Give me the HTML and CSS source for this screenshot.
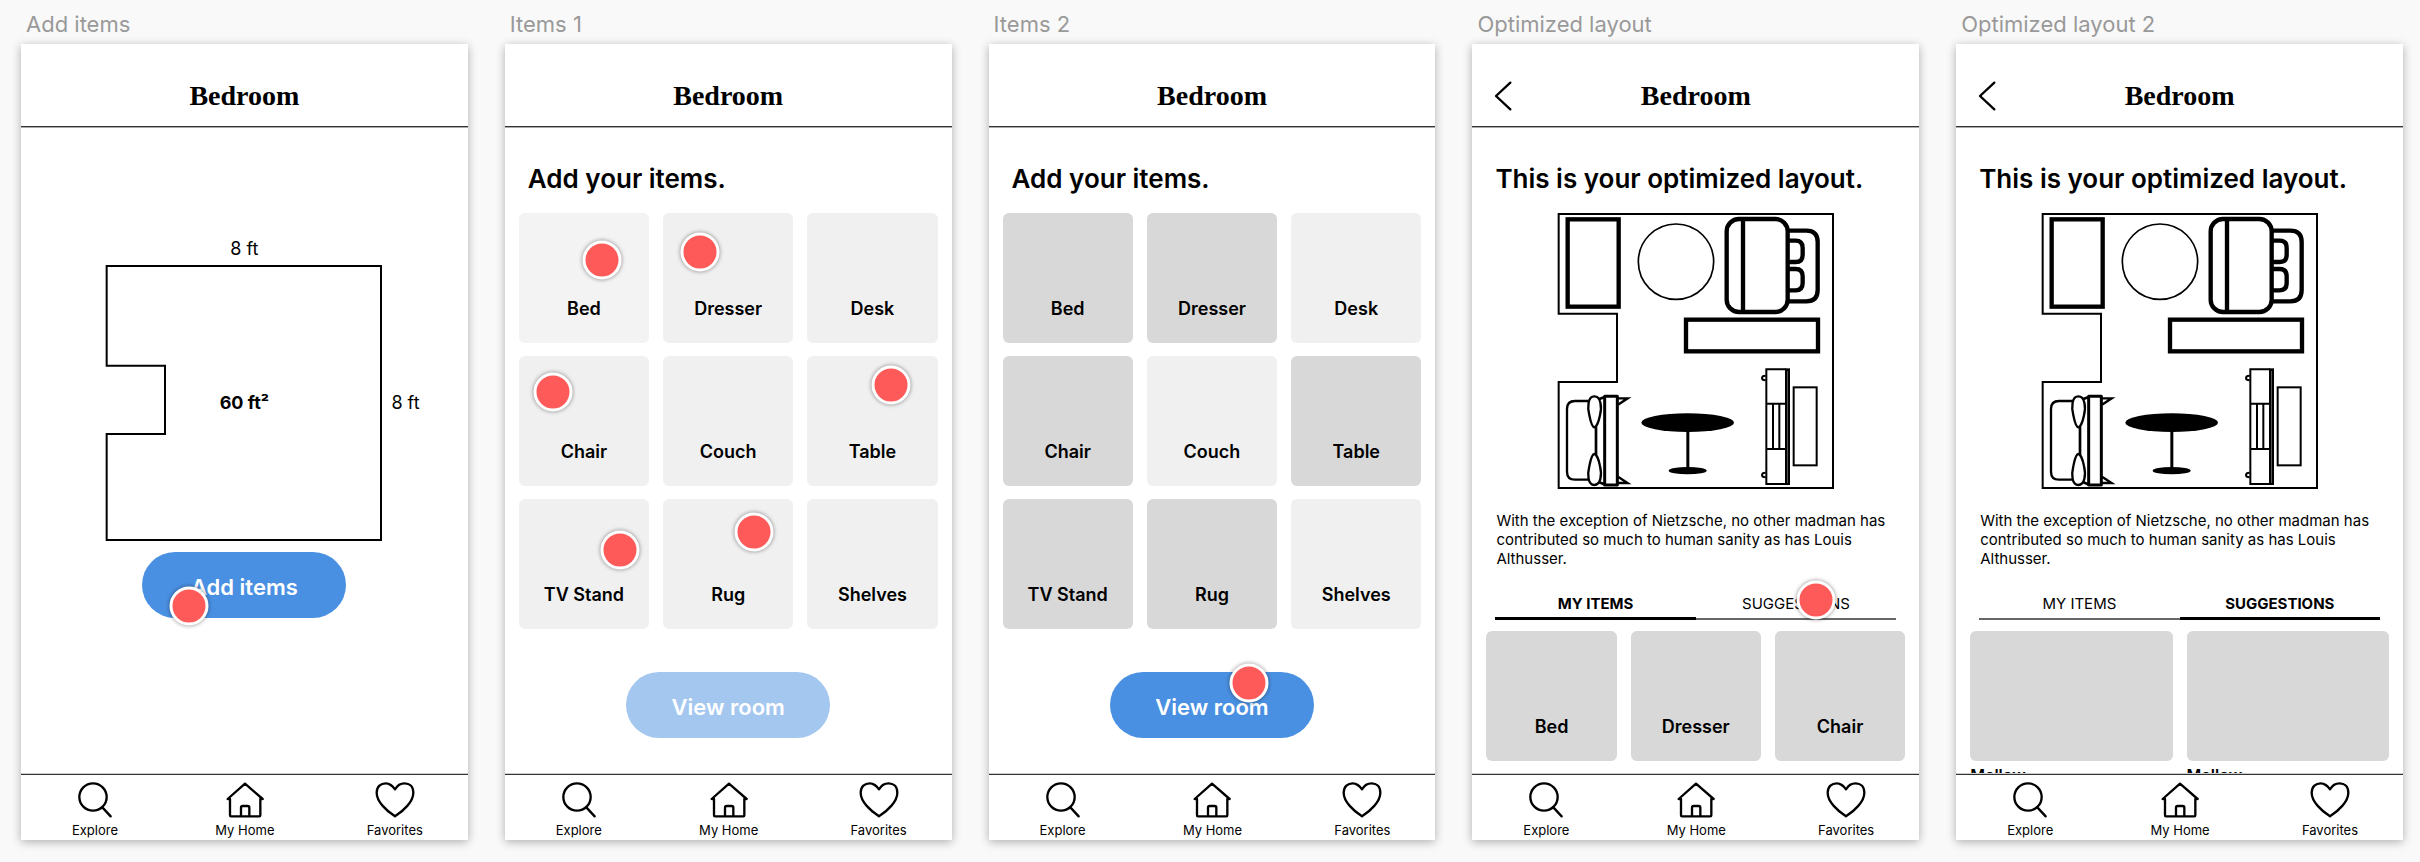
FILE: index.html
```html
<!DOCTYPE html>
<html lang="en">
<head>
<meta charset="utf-8">
<meta name="viewport" content="width=device-width, initial-scale=1">
<title>Bedroom planner</title>
<link rel="stylesheet" href="styles.css">
</head>
<body>
<svg class="sprite" aria-hidden="true">
  <symbol id="search" viewBox="0 0 120 114"><g class="ink"><circle cx="54" cy="48" r="41"/><path d="M82 79L107 106"/></g></symbol>
  <symbol id="home" viewBox="0 0 120 114"><g class="ink"><path d="M15 56L8 54L60 8L113 54L106 56M15 54V103Q15 106 18 106H103Q106 106 106 103V54M48 106V80Q48 75 53 75H68Q73 75 73 80V106"/></g></symbol>
  <symbol id="heart" viewBox="0 0 120 114"><g class="ink"><path d="M60 106C35 90 5 62 5 35C5 16 18 7 32 7C45 7 51 13 60 25C69 13 75 7 89 7C103 7 115 16 115 35C115 62 85 90 60 106Z"/></g></symbol>
  <symbol id="room" viewBox="49 35 834 834"><path fill="none" stroke="#000" stroke-width="6" d="M54 41H877V863H54V545H229V340H54Z"/></symbol>
  <symbol id="furniture" viewBox="49 35 834 834">
    <g fill="none" stroke="#000" stroke-width="6">
      <g stroke-width="13">
        <rect x="81" y="57" width="153" height="262"/>
        <rect x="436" y="358" width="396" height="95"/>
        <rect x="558" y="56" width="183" height="279" rx="37"/>
        <path d="M607 56V335M741 91H797Q831 91 831 125V269Q831 303 797 303H741"/>
        <path d="M741 121H765Q786 121 786 143V163Q786 185 765 185H741M741 206H765Q786 206 786 228V248Q786 270 765 270H741"/>
      </g>
      <circle cx="406" cy="184" r="113" stroke-width="5"/>
      <rect x="759" y="561" width="69" height="234"/>
      <rect x="736" y="507" width="9" height="344" fill="#555"/>
      <path d="M736 507H677V851H736M677 610H736M677 746H736M697 610V746M716 610V746"/>
      <path d="M675 526Q664 526 664 533Q664 540 675 540M675 817Q664 817 664 824Q664 831 675 831"/>
      <path stroke-width="7" d="M145 602H103Q79 602 79 626V814Q79 838 103 838H145"/>
      <path stroke-width="7" d="M161 588C181 588 184 620 178 645C174 665 167 681 161 681C155 681 150 665 146 645C140 620 141 588 161 588Z"/>
      <path stroke-width="7" d="M161 854C181 854 184 822 178 797C174 777 167 761 161 761C155 761 150 777 146 797C140 822 141 854 161 854Z"/>
      <path stroke-width="8" d="M166 678V764M176 596L194 589M176 846L194 853"/>
      <path stroke-width="9" stroke-linejoin="round" d="M192 588H230V854H192Z"/>
      <path stroke-width="7" d="M232 594H261L232 613M232 848H261L232 829"/>
    </g>
    <ellipse cx="441" cy="667" rx="139" ry="28"/>
    <path d="M437 690H446V805H437Z"/>
    <ellipse cx="441" cy="811" rx="57" ry="11"/>
  </symbol>
</svg>
<main class="board">
  <section class="artboard">
    <h2 class="artboard-name">Add items</h2>
    <div class="screen">
      <header class="bar"><h1 class="title">Bedroom</h1></header>
      <div class="content measure">
        <p class="dimension">8 ft</p>
        <div class="measure-row">
          <svg class="plan" role="img" aria-label="Room outline"><use href="#room"/></svg>
          <p class="area">60 ft²</p>
          <p class="dimension side">8 ft</p>
        </div>
        <button class="cta" type="button">Add items<span class="marker on-add"></span></button>
      </div>
      <nav class="tabbar">
        <a href="#"><svg><use href="#search"/></svg>Explore</a>
        <a href="#"><svg><use href="#home"/></svg>My Home</a>
        <a href="#"><svg><use href="#heart"/></svg>Favorites</a>
      </nav>
    </div>
  </section>

  <section class="artboard">
    <h2 class="artboard-name">Items 1</h2>
    <div class="screen">
      <header class="bar"><h1 class="title">Bedroom</h1></header>
      <div class="content">
        <h2 class="heading">Add your items.</h2>
        <div class="tiles">
          <button class="tile pressed" type="button">Bed<span class="marker on-bed"></span></button>
          <button class="tile" type="button">Dresser<span class="marker on-dresser"></span></button>
          <button class="tile" type="button">Desk</button>
          <button class="tile" type="button">Chair<span class="marker on-chair"></span></button>
          <button class="tile" type="button">Couch</button>
          <button class="tile" type="button">Table<span class="marker on-table"></span></button>
          <button class="tile" type="button">TV Stand<span class="marker on-tv"></span></button>
          <button class="tile" type="button">Rug<span class="marker on-rug"></span></button>
          <button class="tile" type="button">Shelves</button>
        </div>
        <button class="cta after-tiles" type="button" disabled>View room</button>
      </div>
      <nav class="tabbar">
        <a href="#"><svg><use href="#search"/></svg>Explore</a>
        <a href="#"><svg><use href="#home"/></svg>My Home</a>
        <a href="#"><svg><use href="#heart"/></svg>Favorites</a>
      </nav>
    </div>
  </section>

  <section class="artboard">
    <h2 class="artboard-name">Items 2</h2>
    <div class="screen">
      <header class="bar"><h1 class="title">Bedroom</h1></header>
      <div class="content">
        <h2 class="heading">Add your items.</h2>
        <div class="tiles">
          <button class="tile selected" type="button" aria-pressed="true">Bed</button>
          <button class="tile selected" type="button" aria-pressed="true">Dresser</button>
          <button class="tile" type="button">Desk</button>
          <button class="tile selected" type="button" aria-pressed="true">Chair</button>
          <button class="tile" type="button">Couch</button>
          <button class="tile selected" type="button" aria-pressed="true">Table</button>
          <button class="tile selected" type="button" aria-pressed="true">TV Stand</button>
          <button class="tile selected" type="button" aria-pressed="true">Rug</button>
          <button class="tile" type="button">Shelves</button>
        </div>
        <button class="cta after-tiles" type="button">View room<span class="marker on-view"></span></button>
      </div>
      <nav class="tabbar">
        <a href="#"><svg><use href="#search"/></svg>Explore</a>
        <a href="#"><svg><use href="#home"/></svg>My Home</a>
        <a href="#"><svg><use href="#heart"/></svg>Favorites</a>
      </nav>
    </div>
  </section>

  <section class="artboard">
    <h2 class="artboard-name">Optimized layout</h2>
    <div class="screen">
      <header class="bar">
        <button class="back" type="button" aria-label="Back"><svg viewBox="0 0 54 90"><path class="ink" d="M49 5L6 45L49 85"/></svg></button>
        <h1 class="title">Bedroom</h1>
      </header>
      <div class="content">
        <h2 class="heading">This is your optimized layout.</h2>
        <svg class="plan furnished" role="img" aria-label="Furnished room"><use href="#room"/><use href="#furniture"/></svg>
        <p class="note">With the exception of Nietzsche, no other madman has contributed so much to human sanity as has Louis Althusser.</p>
        <div class="tabs" role="tablist">
          <button class="tab active" type="button" role="tab" aria-selected="true">MY ITEMS</button>
          <button class="tab" type="button" role="tab" aria-selected="false">SUGGESTIONS<span class="marker on-tab"></span></button>
        </div>
        <div class="tiles">
          <button class="tile selected" type="button">Bed</button>
          <button class="tile selected" type="button">Dresser</button>
          <button class="tile selected" type="button">Chair</button>
        </div>
      </div>
      <nav class="tabbar">
        <a href="#"><svg><use href="#search"/></svg>Explore</a>
        <a href="#"><svg><use href="#home"/></svg>My Home</a>
        <a href="#"><svg><use href="#heart"/></svg>Favorites</a>
      </nav>
    </div>
  </section>

  <section class="artboard">
    <h2 class="artboard-name">Optimized layout 2</h2>
    <div class="screen">
      <header class="bar">
        <button class="back" type="button" aria-label="Back"><svg viewBox="0 0 54 90"><path class="ink" d="M49 5L6 45L49 85"/></svg></button>
        <h1 class="title">Bedroom</h1>
      </header>
      <div class="content">
        <h2 class="heading">This is your optimized layout.</h2>
        <svg class="plan furnished" role="img" aria-label="Furnished room"><use href="#room"/><use href="#furniture"/></svg>
        <p class="note">With the exception of Nietzsche, no other madman has contributed so much to human sanity as has Louis Althusser.</p>
        <div class="tabs" role="tablist">
          <button class="tab" type="button" role="tab" aria-selected="false">MY ITEMS</button>
          <button class="tab active" type="button" role="tab" aria-selected="true">SUGGESTIONS</button>
        </div>
        <div class="cards">
          <article><div class="picture"></div><h3>Mellow</h3></article>
          <article><div class="picture"></div><h3>Mellow</h3></article>
        </div>
      </div>
      <nav class="tabbar">
        <a href="#"><svg><use href="#search"/></svg>Explore</a>
        <a href="#"><svg><use href="#home"/></svg>My Home</a>
        <a href="#"><svg><use href="#heart"/></svg>Favorites</a>
      </nav>
    </div>
  </section>
</main>
</body>
</html>
```
FILE: styles.css
```css
* { box-sizing: border-box; }
body {
  margin: 0;
  background: #f9f9f9;
  color: #000;
  font-family: Inter, "Liberation Sans", sans-serif;
}
h1, h2, h3, p { margin: 0; }
button {
  margin: 0;
  padding: 0;
  border: 0;
  background: none;
  color: inherit;
  font: inherit;
}
.sprite { display: block; width: 0; height: 0; }
.ink {
  fill: none;
  stroke: #000;
  stroke-width: 7;
  stroke-linecap: round;
  stroke-linejoin: round;
}

.board {
  display: grid;
  grid-template-columns: repeat(5, minmax(0, 1fr));
  gap: 37px;
  min-height: 100vh;
  padding: 0 17px 22px 21px;
}
.artboard { display: flex; flex-direction: column; }
.artboard-name {
  height: 44px;
  padding: 10px 5px 0;
  color: #999;
  font-size: 22px;
  font-weight: 400;
  line-height: 28px;
}
.screen {
  flex: 1;
  display: flex;
  flex-direction: column;
  min-height: 0;
  background: #fff;
  box-shadow: 0 2px 9px rgba(0, 0, 0, .3);
}

.bar {
  display: grid;
  grid-template-columns: 1fr auto 1fr;
  align-items: center;
  height: 83px;
  padding: 21px 22px 0;
  border-bottom: 1px solid #333;
  box-shadow: 0 1px #aaa;
}
.title {
  grid-column: 2;
  font-family: "Liberation Serif", serif;
  font-size: 28px;
  font-weight: 700;
  line-height: 34px;
}
.back { grid-column: 1; justify-self: start; width: 18px; height: 30px; }
.back svg { display: block; width: 18px; height: 30px; }

.content {
  flex: 1 1 0;
  display: flex;
  flex-direction: column;
  min-height: 0;
  padding: 36px 14px 0;
  overflow: hidden;
}
.heading {
  padding: 0 9px;
  font-size: 26px;
  font-weight: 600;
  line-height: 32px;
  white-space: nowrap;
}

.measure { align-items: center; padding-top: 110px; }
.measure-row {
  display: grid;
  grid-template-columns: 1fr auto 1fr;
  align-items: center;
  align-self: stretch;
  margin: 3px 0 10px;
}
.plan { grid-area: 1 / 2; display: block; width: 278px; height: 278px; }
.furnished { flex: none; margin: 17px auto 21px; }
.dimension, .area { font-size: 18px; line-height: 24px; }
.area { grid-area: 1 / 2; justify-self: center; font-weight: 700; }
.side { grid-area: 1 / 3; padding-left: 8px; }

.cta {
  position: relative;
  align-self: center;
  flex: none;
  width: 204px;
  height: 66px;
  padding-top: 3px;
  border-radius: 33px;
  background: #4a90e2;
  color: #fff;
  font-size: 22px;
  font-weight: 600;
}
.cta:disabled { background: #a4c7f0; }
.after-tiles { margin-top: 43px; }

.tiles {
  display: grid;
  grid-template-columns: repeat(3, 1fr);
  gap: 13px 14px;
}
.heading + .tiles { margin-top: 18px; }
.tile {
  position: relative;
  height: 130px;
  padding-top: 60px;
  border-radius: 6px;
  background: #f0f0f0;
  font-size: 18px;
  font-weight: 600;
}
.pressed { background: #f3f3f3; }
.selected { background: #d8d8d8; }

.note { padding: 0 10px; font-size: 15px; line-height: 19px; }
.tabs { display: flex; margin: 25px 9px 11px; }
.tab {
  position: relative;
  flex: 1;
  height: 27px;
  padding-bottom: 3px;
  border-bottom: 2px solid #666;
  font-size: 15px;
  line-height: 22px;
}
.tab.active { padding-bottom: 2px; border-bottom: 3px solid #000; font-weight: 700; }
.cards { display: grid; grid-template-columns: 1fr 1fr; gap: 14px; }
.picture { height: 130px; border-radius: 6px; background: #d8d8d8; }
.cards h3 { margin-top: 3px; font-size: 16px; font-weight: 600; line-height: 22px; }

.tabbar {
  display: flex;
  justify-content: space-between;
  position: relative;
  height: 66px;
  padding: 6px 43px 0 44px;
  border-top: 1px solid #333;
  background: #fff;
  box-shadow: 0 -1px #ccc;
}
.tabbar a {
  display: flex;
  flex-direction: column;
  align-items: center;
  gap: 2px;
  width: 60px;
  color: #000;
  font-size: 13px;
  line-height: 18px;
  text-decoration: none;
  white-space: nowrap;
}
.tabbar svg { width: 40px; height: 38px; }

.marker {
  position: absolute;
  width: 39px;
  height: 39px;
  border: 3px solid #fff;
  border-radius: 50%;
  background: #ff5a5a;
  box-shadow: 0 0 4px rgba(0, 0, 0, .45);
  transform: translate(-50%, -50%);
}
.on-add { left: 23%; top: 82%; }
.on-bed { left: 64%; top: 36%; }
.on-dresser { left: 28%; top: 30%; }
.on-chair { left: 26%; top: 28%; }
.on-table { left: 64%; top: 22%; }
.on-tv { left: 78%; top: 39%; }
.on-rug { left: 70%; top: 25%; }
.on-view { left: 68%; top: 17%; }
.on-tab { left: 60%; top: 28%; }
```
